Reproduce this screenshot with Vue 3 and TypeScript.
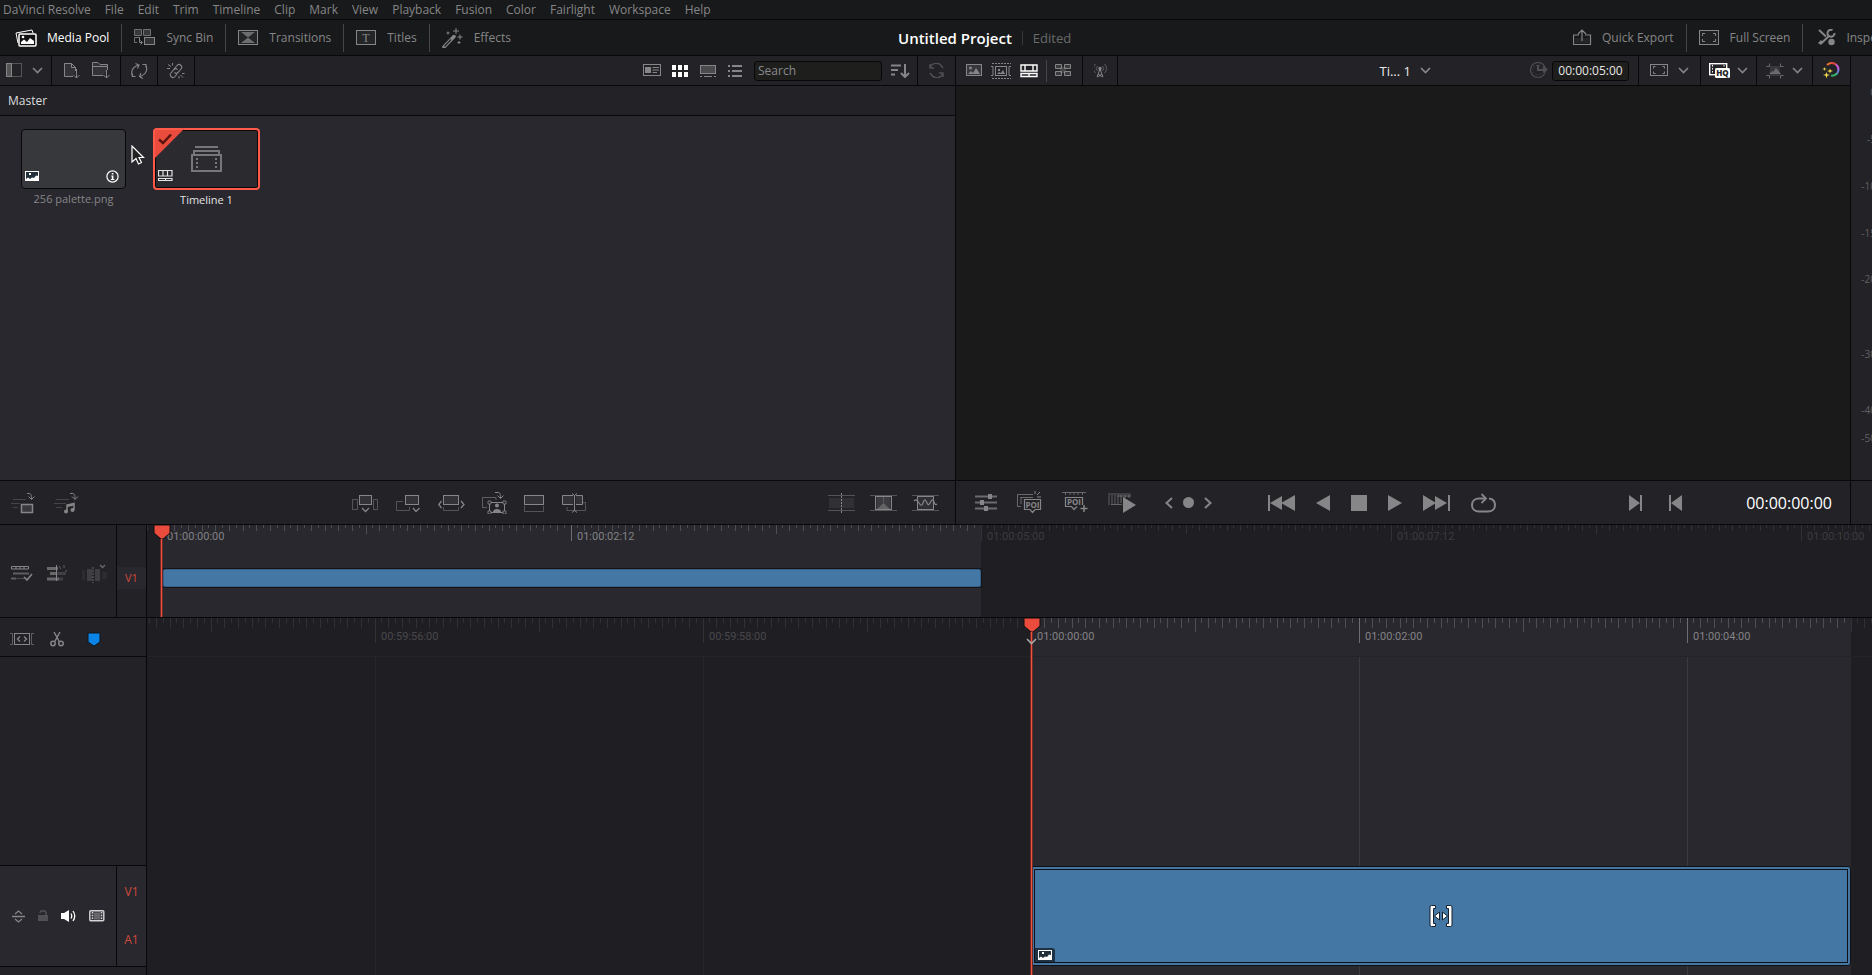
<script setup lang="ts">
import { h, ref } from 'vue'

type IconDef = [width: number, height: number, markup: string]

const stroke = 'fill="none" stroke="currentColor"'

const icons: Record<string, IconDef> = {
  mediaPool: [22, 18, `<path d="M3 14L1 4L17 1L18 4" ${stroke}/><rect x="4" y="5" width="17" height="12" rx="1" fill="#111" stroke="currentColor" stroke-width="1.5"/><path d="M6 15V13L9 10.500L12 13L15 9L19 12V15Z" fill="currentColor"/><circle cx="8" cy="8" r="1.300" fill="currentColor"/>`],
  syncBin: [22, 17, `<path d="M.5 .5H7.500V6.500H.5ZM9.500 .5H16.500V6.500H9.500ZM.5 8.500H6M.5 8.500V13.500H3" ${stroke} opacity=".8"/><path d="M1 1H7V6H1ZM10 1H16V6H10Z" fill="currentColor" opacity=".3"/><path d="M5.500 8.500V13.500H8M6.500 11.500L8.500 13.500L6.500 15.500" ${stroke}/><rect x="10.500" y="8.500" width="10" height="7" fill="#333" stroke="currentColor"/>`],
  transitions: [21, 16, `<rect x=".5" y=".5" width="19" height="14" fill="#242527" stroke="currentColor"/><path d="M3 2H17L10 7.500ZM3 13H17L10 7.500Z" fill="currentColor" opacity=".75"/>`],
  titles: [21, 16, `<rect x=".5" y=".5" width="19" height="14" fill="#242527" stroke="currentColor"/><text x="10" y="11.500" text-anchor="middle" font-family="Liberation Serif, serif" font-size="12" fill="currentColor">T</text>`],
  effects: [22, 20, `<path d="M2 19L12 8.500" ${stroke} stroke-width="3.500" stroke-linecap="round"/><path d="M2.500 18.500L9 11.500" stroke="#222" stroke-width="1.300"/><path d="M14 0V6M11 3H17M18 6.500V11.500M15.500 9H20.500M6 3.500V6.500M4.500 5H7.500M17 13V16M15.500 14.500H18.500" ${stroke}/>`],
  quickExport: [19, 17, `<path d="M6 6H.5V15.500H17.500V6H12M9 12V1M5 5L9 1L13 5" ${stroke} stroke-width="1.200"/><rect x="2" y="9" width="14" height="5" fill="currentColor" opacity=".12"/>`],
  fullScreen: [21, 16, `<rect x=".5" y=".5" width="19" height="14" fill="#202123" stroke="currentColor"/><path d="M3.500 6V3.500H6M14 3.500H16.500V6M16.500 9V11.500H14M6 11.500H3.500V9" ${stroke}/>`],
  inspector: [18, 17, `<path d="M1 1L8 7.500M3 14.500L11 7" ${stroke} stroke-width="2"/><path d="M0 14L3 11L5 13.500L3 16Z" fill="currentColor"/><path d="M14.500 1A3.500 3.500 0 1 0 16.500 4" ${stroke} stroke-width="2"/><circle cx="13.500" cy="13" r="3.200" fill="currentColor"/>`],
  chevron: [11, 7, `<path d="M1 1L5.500 5.500L10 1" ${stroke} stroke-width="1.600"/>`],
  panel: [17, 15, `<rect x=".5" y=".5" width="15" height="13" ${stroke} opacity=".5"/><rect x=".5" y=".5" width="5" height="13" fill="#555" stroke="currentColor"/>`],
  importFile: [16, 16, `<path d="M9 13.500H.5V.5H7.500L11.500 4.500V8M7.500 .5V4.500H11.500" fill="#333237" stroke="currentColor"/><path d="M12.500 6V15M9.500 12L12.500 15L15.500 12" ${stroke}/>`],
  importFolder: [19, 17, `<path d="M11 13.500H.5V.5H6L8 2.500H15.500V8M.5 4.500H15.500" fill="#333237" stroke="currentColor"/><path d="M14.500 8V16M11.500 13L14.500 16L17.500 13" ${stroke}/>`],
  syncClips: [17, 16, `<path d="M1 8.500C1 4 4 2 6 4L7.500 8M1 8.500C1 11.500 2.500 13 4.500 13.500M4 .5H8.500V5M8.500 .5L4 6" ${stroke} stroke-width="1.100" opacity="0"/><path d="M4.500 13.500H1.500V10.500M1.500 13.500L1 12C0 8 2 4 7.500 2M4.500 .5L8 2L6.500 5.500M11.500 1.500H15V4.500M15 2L15.500 4C16.500 8 14 12 9 13.500M12 15.500L8.500 13.500L10 10" ${stroke} stroke-width="1.100"/>`],
  unlink: [18, 16, `<path d="M7 6L10 2.500A2.500 2.500 0 0 1 14 6L11 9.500A2.500 2.500 0 0 1 7.500 9.500M10.500 6.500A2.500 2.500 0 0 0 7 6.500L4 10A2.500 2.500 0 0 0 8 13.500L10 11" ${stroke} stroke-width="1.100"/><path d="M0 5.500H3M1 1.500L4 3.500M5.500 0V2.500M15 10.500H17.500M13.500 12L16 14.500M12 13V15.500" ${stroke}/>`],
  metadata: [18, 13, `<rect x=".5" y=".5" width="17" height="11" ${stroke}/><rect x="2" y="3" width="6" height="6" fill="currentColor"/><path d="M9.500 3.500H16M9.500 6H16M9.500 8.500H14" ${stroke}/>`],
  thumbs: [17, 12, '<path d="M0 0H4V5H0ZM6 0H10V5H6ZM12 0H16V5H12ZM0 7H4V12H0ZM6 7H10V12H6ZM12 7H16V12H12Z" fill="currentColor"/>'],
  strip: [17, 12, `<rect x=".5" y=".5" width="15" height="8" fill="#4b4b4d" stroke="currentColor"/><path d="M0 11.500H2M4 11.500H12M14 11.500H16" ${stroke}/>`],
  list: [15, 12, '<path d="M0 0H2V2H0ZM4 0H14V2H4ZM0 5H2V7H0ZM4 5H14V7H4ZM0 10H2V12H0ZM4 10H14V12H4Z" fill="currentColor"/>'],
  sort: [19, 14, `<path d="M0 1.500H10M0 6H7M0 10.500H4M14 0V12M10 9L14 13L18 9" ${stroke} stroke-width="2"/>`],
  refresh: [16, 15, `<path d="M1 5A6.500 6.500 0 0 1 12.500 3L14 5M14 10A6.500 6.500 0 0 1 2.500 12L1 10M1 1V5H5M14 14V10H10" ${stroke} stroke-width="1.400"/>`],
  image: [17, 13, `<rect x=".5" y=".5" width="15" height="11" fill="#38373c" stroke="currentColor"/><path d="M2 10L5 7L7 9L10 4L14 10Z" fill="currentColor"/><circle cx="4.500" cy="4" r="1.500" fill="currentColor"/>`],
  sourceStrip: [21, 16, `<path d="M1 .5H20M1 15.500H20" ${stroke} stroke-dasharray="2 1"/><rect x="4.500" y="3.500" width="11" height="9" ${stroke}/><path d="M0 3.500H2V12.500H0M20 3.500H18V12.500H20" ${stroke}/><path d="M6 11L8 9L10 10L12 7L14 11ZM7 6H9V8H7Z" fill="currentColor"/>`],
  timelineView: [18, 14, `<path d="M1 1H17V7H1ZM5 1V7M13 1V7M1 9.500H17V12.500H1ZM9 9.500V12.500" ${stroke} stroke-width="1.400"/>`],
  timelineSmall: [15, 11, `<path d="M.5 .5H14V6H.5ZM5 .5V6M9.500 .5V6M.5 8.500H14V10.500H.5ZM7.500 8V11" ${stroke} stroke-width="1.200"/>`],
  quad: [17, 13, `<path d="M.5 .5H6.500V4.500H.5ZM9.500 .5H15.500V4.500H9.500ZM.5 7.500H6.500V11.500H.5ZM9.500 7.500H15.500V11.500H9.500Z" fill="#3b3a3f" stroke="currentColor"/><path d="M5 3H11V9H5Z" fill="currentColor" opacity=".35"/>`],
  antenna: [13, 14, `<path d="M3.500 2A3.500 3.500 0 0 0 3.500 7M8.500 2A3.500 3.500 0 0 1 8.500 7M1.500 0A6 6 0 0 0 1.500 9M10.500 0A6 6 0 0 1 10.500 9" ${stroke} opacity=".6"/><circle cx="6" cy="4.500" r="1.700" fill="currentColor"/><path d="M6 5L3 13M6 5L9 13M4 10L8.500 13M8 10L3.500 13" ${stroke}/>`],
  clock: [19, 17, `<circle cx="8" cy="8" r="7.500" ${stroke} stroke-width="1.200"/><circle cx="8" cy="8" r="5" ${stroke} stroke-dasharray="1 2"/><path d="M8 3V8H15" ${stroke} stroke-width="2"/><path d="M13 4L18 7.500L13 11Z" fill="currentColor"/>`],
  frame: [19, 13, `<rect x=".5" y=".5" width="17" height="11" ${stroke}/><path d="M3.500 4.500V2.500H5.500M12.500 2.500H14.500V4.500M14.500 7.500V9.500H12.500M5.500 9.500H3.500V7.500" ${stroke}/>`],
  hq: [21, 15, `<rect x=".7" y=".7" width="17" height="11" fill="#232227" stroke="currentColor" stroke-width="1.400"/><path d="M3.500 2V11M15 2V5" ${stroke} stroke-dasharray="1.500 1.500"/><rect x="6" y="5" width="15" height="10" rx="1.500" fill="currentColor"/><text x="13.500" y="13" text-anchor="middle" font-family="Open Sans, sans-serif" font-size="8" font-weight="800" fill="#222">HQ</text>`],
  cropImage: [19, 16, `<path d="M.5 3.500H3.500V.5M17.500 3.500H14.500V.5M.5 12.500H3.500V15.500M17.500 12.500H14.500V15.500" ${stroke}/><rect x="4" y="3" width="10" height="10" fill="currentColor" opacity=".3"/><path d="M3 11L6 8L7 9L10 5L15 11Z" fill="currentColor"/>`],
  colour: [19, 17, '<g fill="none" stroke-width="2"><path d="M5 3A6.500 6.500 0 0 1 10 1" stroke="#e8702f"/><path d="M9 1A6.500 6.500 0 0 1 14.500 3" stroke="#e04545"/><path d="M14 2.500A6.500 6.500 0 0 1 16.500 8" stroke="#c05bd0"/><path d="M16.500 7.500A6.500 6.500 0 0 1 14.500 12" stroke="#6a7fe0"/><path d="M15 11.500A6.500 6.500 0 0 1 9 13.500" stroke="#35b368"/></g><path d="M2.500 5L3 6.500L5 7L3 7.500L2.500 9L2 7.500L0 7L2 6.500ZM8 6.500L8.700 8.300L11 9L8.700 9.700L8 11.500L7.300 9.700L5 9L7.300 8.300ZM4.500 10L5.300 12.300L8 13L5.300 13.700L4.500 16.500L3.700 13.700L1 13L3.700 12.300Z" fill="#f3dc4a"/>'],
  appendVideo: [24, 22, `<path d="M2 7.500H15M0 11.500H9M2 15.500H7" ${stroke} opacity=".35"/><rect x="10.500" y="12.500" width="11" height="8" fill="#38373c" stroke="currentColor" stroke-width="1.500"/><path d="M16 1.500H18C20 1.500 20.500 3 20.500 7M17.500 4.500L20.500 7.500L23.500 4.500" ${stroke}/>`],
  appendAudio: [25, 22, `<path d="M2 7.500H15M0 11.500H12M2 15.500H8" ${stroke} opacity=".35"/><path d="M13 20V13L20 11.500V18" ${stroke} stroke-width="1.500"/><path d="M13 14L20 12.500" ${stroke} stroke-width="2"/><circle cx="12" cy="19.500" r="2" fill="currentColor"/><circle cx="18.500" cy="18" r="2" fill="currentColor"/><path d="M16 1.500H18C20.500 1.500 21 3 21 7M18 4.500L21 7.500L24 4.500" ${stroke}/>`],
  smartInsert: [27, 20, `<rect x="7.500" y="2.500" width="12" height="9" fill="#333237" stroke="currentColor"/><path d="M.5 6.500H5.500V16.500H.5ZM21.500 6.500H25.500V16.500H21.500Z" ${stroke} opacity=".5"/><path d="M10 15L13.500 18.500L17 15" ${stroke} stroke-width="1.300"/>`],
  append: [25, 20, `<rect x="9.500" y="2.500" width="13" height="9" fill="#333237" stroke="currentColor"/><path d="M7 8.500H.5V17.500H13.500V14" ${stroke} opacity=".5"/><path d="M17 15L20 18.500L23.500 15" ${stroke} stroke-width="1.300"/>`],
  ripple: [27, 20, `<rect x="5.500" y="2.500" width="15" height="9" fill="#333237" stroke="currentColor"/><path d="M5.500 14V17.500H20.500V14" ${stroke} opacity=".5"/><path d="M3.500 8L.8 11.500L3.500 15M23 8L26 11.500L23 15" ${stroke} stroke-width="1.300"/>`],
  closeUp: [25, 23, `<path d="M5 16.500H.5V6.500H14V9" ${stroke} opacity=".6"/><path d="M13 1.500H16C18 1.500 18.500 3 18.500 7M15.500 4.500L18.500 7.500L21.500 4.500" ${stroke}/><rect x="7.500" y="11.500" width="15" height="10" ${stroke}/><path d="M6 10H9V13H6ZM21 10H24V13H21ZM6 20H9V23H6ZM21 20H24V23H21Z" fill="#232227" stroke="currentColor" stroke-width=".8"/><circle cx="15" cy="14.500" r="2" fill="currentColor"/><path d="M11 21C11 17 19 17 19 21Z" fill="currentColor"/>`],
  placeOnTop: [21, 20, `<rect x=".5" y="2.500" width="19" height="9" fill="#333237" stroke="currentColor"/><path d="M.5 13V18.500H19.500V13" ${stroke} opacity=".5"/>`],
  sourceOverwrite: [25, 20, `<path d="M11 2.500H.5V11.500H11M14 2.500H20.500V11.500H14" fill="#333237" stroke="currentColor"/><path d="M5 14V17.500H23.500V9.500H21" ${stroke} opacity=".5"/><path d="M12.500 2V18M10 .5L12.500 2.500L15 .5M10 19.500L12.500 17.500L15 19.500" ${stroke}/>`],
  cut: [27, 20, `<path d="M0 2.500H27M0 17.500H27" ${stroke} opacity=".5"/><path d="M1 5H26V15H1Z" fill="currentColor" opacity=".15"/><path d="M13.500 0V20" ${stroke} stroke-dasharray="2 1"/>`],
  dissolve: [27, 20, `<path d="M0 2.500H27M0 17.500H27" ${stroke} opacity=".5"/><rect x="5.500" y="3.500" width="16" height="13" fill="#303034" stroke="currentColor"/><path d="M7 16L13.500 10L20 16Z" fill="currentColor" opacity=".6"/><path d="M13.500 4V10L7 16V4ZM13.500 4V10L20 16V4Z" fill="currentColor" opacity=".15"/><path d="M13.500 4V10" ${stroke} opacity=".4"/>`],
  smooth: [27, 20, `<path d="M0 2.500H27M0 17.500H27" ${stroke} opacity=".5"/><rect x="5.500" y="3.500" width="16" height="13" fill="#303034" stroke="currentColor"/><path d="M2 8C4 6 5 7 7 10S10 13 11 10S13 6 14 8S16 14 18 10S21 6 22 9S24 12 25 11" ${stroke} stroke-width="1.200"/>`],
  sliders: [22, 17, `<path d="M0 2.500H22M0 8.500H22M0 14.500H22" ${stroke} stroke-width="2" opacity=".75"/><path d="M13 0H17V5H13ZM5 6H9V11H5ZM9 12H13V17H9Z" fill="currentColor"/>`],
  poiJump: [25, 23, `<path d="M4 15.500H.5V3.500H16M4 13V6M3.500 6.500H16" ${stroke} opacity=".7"/><path d="M7.500 8.500H23.500V18.500H18L15.500 21.500L13 18.500H7.500Z" fill="#232227" stroke="currentColor" stroke-width="1.200"/><text x="15.500" y="16.800" text-anchor="middle" font-family="Open Sans, sans-serif" font-size="8" font-weight="700" fill="currentColor">POI</text><path d="M18 0V3M20 4L23 1M20 6H24" ${stroke}/>`],
  poiAdd: [26, 22, `<path d="M0 .5H24M3.500 .5V3M8 .5V3M12 .5V3M16 .5V3M20.500 .5V3" ${stroke} opacity=".7"/><path d="M15 14.500L12 17.500L9.500 14.500H3.500V5.500H20.500V13" ${stroke} stroke-width="1.200"/><text x="12" y="13" text-anchor="middle" font-family="Open Sans, sans-serif" font-size="8" font-weight="700" fill="currentColor">POI</text><path d="M22 13V20M18.500 16.500H25.500" ${stroke} stroke-width="1.500"/>`],
  fastReview: [29, 20, `<path d="M0 1H23M3 11.500H14M4 2V12M7 2V12M10 2V12M1 2V12" ${stroke} opacity=".6"/><path d="M9 3H23M13 2V10M17 2V5M21 2V5" ${stroke} opacity=".7"/><path d="M15 4L28 12L15 20Z" fill="currentColor"/>`],
  prev: [8, 12, `<path d="M7 1L1.500 6L7 11" ${stroke} stroke-width="2"/>`],
  dot: [11, 11, '<circle cx="5.500" cy="5.500" r="5.500" fill="currentColor"/>'],
  next: [8, 12, `<path d="M1 1L6.500 6L1 11" ${stroke} stroke-width="2"/>`],
  first: [27, 16, '<path d="M0 0H2V16H0ZM14 1V15L2 8ZM27 0V16L13 8Z" fill="currentColor"/>'],
  back: [14, 16, '<path d="M14 0V16L0 8Z" fill="currentColor"/>'],
  stop: [16, 16, '<path d="M0 0H16V16H0Z" fill="currentColor"/>'],
  play: [14, 16, '<path d="M0 0V16L14 8Z" fill="currentColor"/>'],
  last: [27, 16, '<path d="M0 0V16L13 8ZM12 1V15L24 8ZM25 0H27V16H25Z" fill="currentColor"/>'],
  loop: [25, 20, `<path d="M15 5.500H8C4 5.500 1 8 1 12S4 18.500 8 18.500H17C21 18.500 24 16 24 12S22 6 18 5.500" ${stroke} stroke-width="2"/><path d="M10.500 1L15 5.500L10.500 10" ${stroke} stroke-width="1.800"/>`],
  toOut: [14, 16, '<path d="M0 0V16L11 8ZM11 0H13V16H11Z" fill="currentColor"/>'],
  toIn: [14, 16, '<path d="M13 0V16L2 8ZM0 0H2V16H0Z" fill="currentColor"/>'],
  timelineOptions: [22, 16, `<path d="M.5 1.500H17.500V4H.5ZM5 1.500V4M9 1.500V4M13 1.500V4" ${stroke}/><path d="M2 8.500H18M0 13.500H5" ${stroke} stroke-width="2" opacity=".6"/><path d="M5 13.500H13" ${stroke} opacity=".4"/><path d="M13 12L16 15L21 9" ${stroke} stroke-width="1.600"/>`],
  boring: [21, 16, `<path d="M0 3.500H11M0 14H12" ${stroke} stroke-width="3" opacity=".7"/><path d="M3 8.500H9" ${stroke} stroke-width="3" opacity=".7"/><path d="M9 8.500H19M12 14H16" ${stroke} stroke-width="3" opacity=".3"/><path d="M9.500 0V16" ${stroke}/><path d="M14 4L12 1M17 3V0M18 6H20" ${stroke} opacity=".6"/>`],
  silence: [25, 19, `<path d="M5 5V17H10V5ZM13 5H18V17H13Z" fill="currentColor" opacity=".4"/><path d="M0 6H3V16H0ZM20 8H25V15H20Z" fill="currentColor" opacity=".15"/><path d="M11 3V19" ${stroke} stroke-dasharray="2 1"/><path d="M18 1L20.500 3.500L23 1" ${stroke} stroke-width="1.300"/>`],
  trimMode: [24, 14, `<path d="M0 1.500H2.500V12.500H0M24 1.500H21.500V12.500H24" ${stroke} opacity=".6"/><rect x="4.500" y="1.500" width="15" height="11" ${stroke}/><path d="M10 4.500L7.500 7L10 9.500M14 4.500L16.500 7L14 9.500" ${stroke} stroke-width="1.300"/>`],
  scissors: [15, 15, `<path d="M4 0L9.500 10M10 0L4.500 10" ${stroke} stroke-width="1.400"/><circle cx="3" cy="11.500" r="2.200" ${stroke} stroke-width="1.500"/><circle cx="11" cy="11.500" r="2.200" ${stroke} stroke-width="1.500"/>`],
  marker: [14, 15, '<path d="M1 2Q1 1 2 1H12Q13 1 13 2V10L7 14L1 10Z" fill="#0a84e6" stroke="#0c1620"/>'],
  resize: [13, 13, `<path d="M0 6.500H13M3 4L6.500 1L10 4M3 9L6.500 12L10 9" ${stroke} stroke-width="1.300"/>`],
  lock: [11, 12, `<path d="M0 5H10V11H0Z" fill="currentColor"/><path d="M2 3C2 0 8 0 8 3V5" ${stroke} stroke-width="1.500"/>`],
  speaker: [15, 12, `<path d="M0 3H3L8 0V12L3 9H0Z" fill="currentColor"/><path d="M10 3.500Q11.500 6 10 8.500M12 1Q15.500 6 12 11" ${stroke} stroke-width="1.300"/>`],
  film: [16, 12, `<rect x=".8" y=".8" width="14" height="10" rx="1" fill="#38373c" stroke="currentColor" stroke-width="1.400"/><rect x="5" y="2.500" width="6" height="7" fill="#66656a"/><path d="M3.500 2V10M12.500 2V10" ${stroke} stroke-width="1.500" stroke-dasharray="1.500 1.200"/>`],
  picture: [14, 10, '<path d="M0 0H14V10H0Z" fill="#fff"/><path d="M1 1H13V5L11 4.500L9 7L7 6.500L5 8L3 6.500L1 8Z" fill="#22303c"/><rect x="4" y="2" width="2" height="2" fill="#fff"/>'],
  info: [13, 13, `<circle cx="6.500" cy="6.500" r="5.600" ${stroke} stroke-width="1.200"/><path d="M5.800 3H7.400V4.400H5.800ZM5.200 5.500H7.400V9H8.400V10H4.800V9H5.800V6.500H5.200Z" fill="currentColor"/>`],
  stack: [31, 26, `<path d="M4 1H27M3 8V5H28V8" ${stroke} stroke-width="2"/><rect x="1" y="9" width="29" height="16" ${stroke} stroke-width="2"/><path d="M6 12V23M25 12V23" ${stroke} stroke-width="2" stroke-dasharray="2 2"/>`],
  check: [14, 12, '<path d="M1 6.500L5 10L13 1.500" fill="none" stroke="#5c1410" stroke-width="2.500"/>'],
  arrow: [14, 21, '<path d="M1 1V17L5 13.500L7.500 19L10.500 17.500L8 12.500H12.500Z" fill="#222" stroke="#fff" stroke-width="1.200"/>'],
  trimCursor: [24, 24, '<g fill="#fff" stroke="#16212c" stroke-width="1"><path d="M6.500 1.500H2.500Q1 1.500 1 3V21Q1 22.500 2.500 22.500H6.500V19.500H4.500V4.500H6.500Z"/><path d="M17.500 1.500H21.500Q23 1.500 23 3V21Q23 22.500 21.500 22.500H17.500V19.500H19.500V4.500H17.500Z"/><path d="M10.500 8V16L5.500 12ZM13.500 8V16L18.500 12Z"/></g>'],
  head: [18, 14, '<path d="M1 0H17V8L10 14H8L1 8Z" fill="#e94b3c" stroke="#111"/>'],
}

const Icon = (props: { name: string }) => {
  const [w, hgt, markup] = icons[props.name]
  return h('svg', { width: w, height: hgt, viewBox: `0 0 ${w} ${hgt}`, 'aria-hidden': 'true', innerHTML: markup })
}

const menus = ['DaVinci Resolve', 'File', 'Edit', 'Trim', 'Timeline', 'Clip', 'Mark', 'View', 'Playback', 'Fusion', 'Color', 'Fairlight', 'Workspace', 'Help']
const panels = [
  { label: 'Media Pool', icon: 'mediaPool' },
  { label: 'Sync Bin', icon: 'syncBin' },
  { label: 'Transitions', icon: 'transitions' },
  { label: 'Titles', icon: 'titles' },
  { label: 'Effects', icon: 'effects' },
]
const actions = [
  { label: 'Quick Export', icon: 'quickExport' },
  { label: 'Full Screen', icon: 'fullScreen' },
  { label: 'Inspector', icon: 'inspector' },
]
const activePanel = ref('Media Pool')
const search = ref('')
const duration = ref('00:00:05:00')

const placeTools = ['smartInsert', 'append', 'ripple', 'closeUp', 'placeOnTop', 'sourceOverwrite']
const transitionTools = ['cut', 'dissolve', 'smooth']
const viewTools = ['sliders', 'poiJump', 'poiAdd', 'fastReview']
const transport = ['first', 'back', 'stop', 'play', 'last', 'loop']

const levels = [
  { db: '0', at: 8.4 },
  { db: '-5', at: 19.6 },
  { db: '-10', at: 30.6 },
  { db: '-15', at: 41.7 },
  { db: '-20', at: 52.6 },
  { db: '-30', at: 70.2 },
  { db: '-40', at: 83.4 },
  { db: '-50', at: 90 },
]

const fps = 24
const pxPerFrame = 41 / 6
const clipFrames = 120

function timecode(frame: number): string {
  const total = 3600 * fps + frame
  const secs = Math.floor(total / fps)
  return [Math.floor(secs / 3600), Math.floor(secs / 60) % 60, secs % 60, total % fps]
    .map((n) => String(n).padStart(2, '0'))
    .join(':')
}

interface Ruler {
  origin: number
  ticks: { x: number; kind: string; lit: boolean }[]
  labels: { x: number; text: string; lit: boolean }[]
}

function ruler(origin: number, from: number, to: number, major: number): Ruler {
  const out: Ruler = { origin, ticks: [], labels: [] }
  for (let f = from; f <= to; f++) {
    const x = Math.floor(origin + f * pxPerFrame + 0.01)
    const lit = f >= 0 && f < clipFrames
    const kind = f % major === 0 ? 'major' : f % (major / 2) === 0 ? 'half' : f % 2 === 0 ? 'even' : 'odd'
    out.ticks.push({ x, kind, lit })
    if (kind === 'major') out.labels.push({ x, text: timecode(f), lit })
  }
  return out
}

const overview = ruler(14, -2, 252, 60)
const detail = ruler(884, -129, 144, 48)
const clipWidth = clipFrames * pxPerFrame
</script>

<template>
  <div class="app">
    <nav class="menubar" aria-label="Menu">
      <button v-for="m in menus" :key="m" type="button">{{ m }}</button>
    </nav>

    <header class="titlebar">
      <nav class="panels" aria-label="Panels">
        <button v-for="p in panels" :key="p.label" type="button" :class="{ on: activePanel === p.label }" @click="activePanel = p.label">
          <Icon :name="p.icon" /><span>{{ p.label }}</span>
        </button>
      </nav>
      <div class="project"><h1>Untitled Project</h1><span class="state">Edited</span></div>
      <nav class="panels actions" aria-label="Actions">
        <button v-for="a in actions" :key="a.label" type="button"><Icon :name="a.icon" /><span>{{ a.label }}</span></button>
      </nav>
    </header>

    <main class="upper">
      <section class="pool">
        <div class="bar">
          <div class="cell c-panel"><button type="button" aria-label="Bin list"><Icon name="panel" /></button><button type="button" aria-label="Bin list options"><Icon name="chevron" /></button></div>
          <div class="cell c-import"><button type="button" aria-label="Import media"><Icon name="importFile" /></button><button type="button" aria-label="Import folder"><Icon name="importFolder" /></button></div>
          <div class="cell c-one"><button type="button" aria-label="Sync clips"><Icon name="syncClips" /></button></div>
          <div class="cell c-one"><button type="button" aria-label="Relink"><Icon name="unlink" /></button></div>
          <div class="cell c-views">
            <button type="button" aria-label="Metadata view"><Icon name="metadata" /></button>
            <button type="button" class="on" aria-label="Thumbnail view"><Icon name="thumbs" /></button>
            <button type="button" aria-label="Strip view"><Icon name="strip" /></button>
            <button type="button" aria-label="List view"><Icon name="list" /></button>
            <div class="finder">
              <input v-model="search" class="search" type="text" placeholder="Search" aria-label="Search" />
              <button type="button" aria-label="Sort"><Icon name="sort" /></button>
            </div>
          </div>
          <div class="cell c-one dim"><button type="button" aria-label="Refresh"><Icon name="refresh" /></button></div>
        </div>
        <h2 class="bin">Master</h2>
        <div class="clips">
          <figure>
            <div class="thumb still"><Icon name="picture" class="kind" /><Icon name="info" class="info" /></div>
            <figcaption>256 palette.png</figcaption>
          </figure>
          <figure class="selected">
            <div class="thumb"><Icon name="stack" class="stack" /><Icon name="check" class="check" /><Icon name="timelineSmall" class="kind" /></div>
            <figcaption>Timeline 1</figcaption>
          </figure>
          <Icon name="arrow" class="pointer" />
        </div>
      </section>

      <section class="viewer">
        <div class="bar">
          <div class="cell c-modes">
            <button type="button" aria-label="Source clip"><Icon name="image" /></button>
            <button type="button" aria-label="Source tape"><Icon name="sourceStrip" /></button>
            <button type="button" class="on" aria-label="Timeline"><Icon name="timelineView" /></button>
            <i class="rule"></i>
            <button type="button" aria-label="Sync bin"><Icon name="quad" /></button>
          </div>
          <div class="cell c-one"><button type="button" aria-label="Live overwrite"><Icon name="antenna" /></button></div>
          <div class="cell c-name"><button type="button" class="name">Ti... 1 <Icon name="chevron" /></button></div>
          <div class="cell c-time"><span class="dim"><Icon name="clock" /></span><input v-model="duration" class="duration" type="text" aria-label="Duration" /></div>
          <div class="cell c-pair first"><button type="button" aria-label="Timeline resolution"><Icon name="frame" /></button><button type="button" aria-label="Resolution options"><Icon name="chevron" /></button></div>
          <div class="cell c-pair"><button type="button" class="on" aria-label="Quality"><Icon name="hq" /></button><button type="button" aria-label="Quality options"><Icon name="chevron" /></button></div>
          <div class="cell c-pair"><button type="button" class="dim2" aria-label="Transform"><Icon name="cropImage" /></button><button type="button" aria-label="Transform options"><Icon name="chevron" /></button></div>
          <div class="cell c-one"><button type="button" aria-label="Auto color"><Icon name="colour" /></button></div>
        </div>
        <div class="screen"></div>
      </section>

      <aside class="meter">
        <span v-for="l in levels" :key="l.db" :style="{ top: l.at + '%' }">{{ l.db }}</span>
      </aside>
    </main>

    <div class="tools">
      <div class="edit">
        <div class="group adders"><button type="button" aria-label="Video only"><Icon name="appendVideo" /></button><button type="button" aria-label="Audio only"><Icon name="appendAudio" /></button></div>
        <div class="group place"><button v-for="t in placeTools" :key="t" type="button" :aria-label="t"><Icon :name="t" /></button></div>
        <div class="group trans"><button v-for="t in transitionTools" :key="t" type="button" :aria-label="t"><Icon :name="t" /></button></div>
      </div>
      <div class="playback">
        <div class="group view"><button v-for="t in viewTools" :key="t" type="button" :aria-label="t"><Icon :name="t" /></button></div>
        <div class="group jog"><button type="button" aria-label="Previous"><Icon name="prev" /></button><button type="button" aria-label="Jog"><Icon name="dot" /></button><button type="button" aria-label="Next"><Icon name="next" /></button></div>
        <i class="gap-a"></i>
        <div class="group run"><button v-for="t in transport" :key="t" type="button" :aria-label="t"><Icon :name="t" /></button></div>
        <i class="gap-b"></i>
        <div class="group ends"><button type="button" aria-label="Go to out"><Icon name="toOut" /></button><button type="button" aria-label="Go to in"><Icon name="toIn" /></button></div>
        <i class="gap-c"></i>
        <output class="clock">00:00:00:00</output>
      </div>
      <div class="filler"></div>
    </div>

    <section class="overview">
      <div class="side">
        <button type="button" aria-label="Timeline options"><Icon name="timelineOptions" /></button>
        <button type="button" aria-label="Boring detector"><Icon name="boring" /></button>
        <button type="button" class="dim2" aria-label="Silence"><Icon name="silence" /></button>
      </div>
      <div class="tracks"><span>V1</span></div>
      <div class="lane">
        <div class="lit" :style="{ left: overview.origin + 'px', width: clipWidth + 'px' }"></div>
        <div class="ruler">
          <i v-for="t in overview.ticks" :key="t.x" :class="[t.kind, { active: t.lit }]" :style="{ left: t.x + 'px' }"></i>
          <span v-for="l in overview.labels" :key="l.x" :class="{ active: l.lit }" :style="{ left: l.x + 'px' }">{{ l.text }}</span>
        </div>
        <div class="strip" :style="{ marginLeft: overview.origin + 2 + 'px', width: clipWidth - 2 + 'px' }"></div>
        <div class="playhead" :style="{ left: overview.origin + 'px' }"><Icon name="head" /></div>
      </div>
    </section>

    <section class="detail">
      <div class="heads">
        <div class="modes">
          <button type="button" aria-label="Trim mode"><Icon name="trimMode" /></button>
          <button type="button" aria-label="Split"><Icon name="scissors" /></button>
          <button type="button" aria-label="Marker"><Icon name="marker" /></button>
        </div>
        <div class="blank"></div>
        <div class="track">
          <div class="switches">
            <button type="button" aria-label="Track height"><Icon name="resize" /></button>
            <button type="button" class="dim" aria-label="Lock"><Icon name="lock" /></button>
            <button type="button" class="on" aria-label="Mute"><Icon name="speaker" /></button>
            <button type="button" class="soft" aria-label="Video"><Icon name="film" /></button>
          </div>
          <div class="names"><span>V1</span><span>A1</span></div>
        </div>
      </div>
      <div class="lane">
        <div class="lit" :style="{ left: detail.origin + 'px', width: clipWidth + 'px' }"></div>
        <template v-for="l in detail.labels" :key="l.x"><i v-if="l.x !== detail.origin" class="grid" :class="{ active: l.lit }" :style="{ left: l.x + 'px' }"></i></template>
        <div class="ruler">
          <i v-for="t in detail.ticks" :key="t.x" :class="[t.kind, { active: t.lit }]" :style="{ left: t.x + 'px' }"></i>
          <span v-for="l in detail.labels" :key="l.x" :class="{ active: l.lit }" :style="{ left: l.x + 'px' }">{{ l.text }}</span>
        </div>
        <div class="space"></div>
        <div class="clip" :style="{ marginLeft: detail.origin + 'px', width: clipWidth + 'px' }">
          <div class="body"><Icon name="trimCursor" /><span class="badge"><Icon name="picture" /></span></div>
        </div>
        <div class="playhead" :style="{ left: detail.origin + 'px' }"><Icon name="head" /><Icon name="chevron" class="snap" /></div>
      </div>
    </section>
  </div>
</template>

<style>
body {
  margin: 0;
  background: #18191a;
}
</style>

<style scoped>
.app {
  display: grid;
  grid-template-columns: minmax(0, 1fr);
  grid-template-rows: 20px 36px minmax(0, 425fr) 44px 93px minmax(0, 357fr);
  height: 100vh;
  overflow: hidden;
  background: #18191a;
  color: #868688;
  font: 12px/16px "Open Sans", "Noto Sans", sans-serif;
}
.app * {
  box-sizing: border-box;
}
svg {
  display: block;
  flex: none;
}
button {
  display: flex;
  align-items: center;
  padding: 0;
  border: 0;
  background: none;
  color: inherit;
  font: inherit;
  white-space: nowrap;
}
h1, h2, figure {
  margin: 0;
}
.on {
  color: #fff;
}
.dim {
  color: #505054;
}
.dim2 {
  color: #6a6a6c;
}
.menubar {
  display: flex;
  gap: 14px;
  padding: 0 3px;
  border-bottom: 1px solid #08080a;
}
.titlebar {
  display: grid;
  grid-template-columns: minmax(0, 898fr) minmax(0, 662fr) 312px;
  overflow: hidden;
  border-bottom: 1px solid #08080a;
}
.panels {
  display: flex;
  align-items: center;
  padding-left: 3px;
}
.panels button {
  gap: 10px;
  height: 28px;
  padding: 0 12px;
  border-right: 1px solid #454547;
}
.panels button:last-child {
  border-right: 0;
}
.actions {
  padding-left: 1px;
}
.actions button:last-child {
  padding-left: 15px;
}
.project {
  display: flex;
  align-items: center;
}
.project h1 {
  color: #fff;
  font-size: 15px;
  font-weight: 600;
  white-space: nowrap;
}
.state {
  margin-left: 10px;
  padding-left: 10px;
  border-left: 1px solid #38383a;
  color: #6a6a6c;
  font-size: 13px;
  line-height: 14px;
}
.upper {
  display: grid;
  grid-template-columns: minmax(0, 956fr) minmax(0, 895fr) 21px;
  border-bottom: 1px solid #08080a;
}
.pool {
  display: flex;
  flex-direction: column;
  min-width: 0;
  border-right: 1px solid #08080a;
  background: #29282e;
}
.bar {
  display: flex;
  height: 30px;
  border-bottom: 1px solid #08080a;
  background: #232227;
}
.cell {
  display: flex;
  align-items: center;
  border-right: 1px solid #08080a;
}
.cell:last-child {
  border-right: 0;
}
.c-panel {
  gap: 9px;
  padding: 0 8px 0 6px;
}
.c-import {
  gap: 12px;
  padding: 0 9px 0 12px;
}
.c-one {
  justify-content: center;
  width: 37px;
}
.c-views {
  flex: 1;
  justify-content: flex-end;
  gap: 11px;
  padding-right: 7px;
}
.finder {
  display: flex;
  align-items: center;
  gap: 9px;
}
.search, .duration {
  height: 20px;
  padding: 0 3px;
  border: 1px solid #08080a;
  border-radius: 3px;
  outline: 0;
  background: #1e1e1d;
  color: #e6e6e6;
  font: inherit;
}
.search {
  width: 128px;
}
.search::placeholder {
  color: #8a8a8c;
  opacity: 1;
}
.bin {
  height: 30px;
  padding: 7px 8px;
  border-bottom: 1px solid #08080a;
  background: #232227;
  color: #dededf;
  font-size: 12px;
  font-weight: 400;
}
.clips {
  position: relative;
  display: flex;
  flex: 1;
  gap: 26px;
  padding: 12px 20px;
}
figure {
  width: 107px;
  text-align: center;
}
figcaption {
  margin-top: 2px;
  font-size: 11px;
}
.thumb {
  position: relative;
  display: grid;
  place-items: center;
  height: 62px;
  border: 2px solid #ff5a49;
  border-radius: 4px;
  background: #2b2a2f;
  box-shadow: inset 0 0 0 1px #08080a;
}
.still {
  height: 60px;
  margin: 1px 1px;
  border: 1px solid #08080a;
  background: #37383c;
  box-shadow: none;
}
.selected {
  color: #e2e2e3;
}
.selected .thumb::before {
  content: "";
  position: absolute;
  top: 0;
  left: 0;
  width: 28px;
  height: 28px;
  background: #e94b3c;
  clip-path: polygon(0 0, 100% 0, 0 100%);
}
.thumb .kind {
  position: absolute;
  bottom: 7px;
  left: 3px;
}
.thumb .info {
  position: absolute;
  right: 6px;
  bottom: 5px;
  color: #fff;
}
.stack {
  color: #77777a;
}
.thumb .check {
  position: absolute;
  top: 3px;
  left: 3px;
}
.pointer {
  position: absolute;
  top: 29px;
  left: 131px;
}
.viewer {
  display: flex;
  flex-direction: column;
  min-width: 0;
  border-right: 1px solid #08080a;
}
.screen {
  flex: 1;
  background: #1a1a1a;
}
.c-modes {
  gap: 8px;
  padding: 0 10px 0 10px;
}
.rule {
  width: 1px;
  height: 22px;
  background: #454449;
}
.viewer .c-modes + .c-one {
  width: 35px;
}
.c-name {
  flex: 1;
  justify-content: flex-end;
  border-right: 0;
}
.name {
  gap: 9px;
  color: #e9e9ea;
  font-size: 13px;
}
.name svg {
  color: #8a8a8c;
}
.c-time {
  gap: 3px;
  margin-left: 99px;
  padding-right: 9px;
}
.duration {
  width: 77px;
  text-align: center;
}
.c-pair {
  justify-content: center;
  gap: 7px;
  width: 56px;
}
.c-pair.first {
  gap: 9px;
  width: 62px;
}
.meter {
  position: relative;
  overflow: hidden;
  background: #232227;
  color: #606063;
  font-size: 10px;
  line-height: 14px;
}
.meter span {
  position: absolute;
  right: -4px;
  margin-top: -7px;
}
.tools {
  display: grid;
  grid-template-columns: minmax(0, 956fr) minmax(0, 895fr) 21px;
  border-bottom: 1px solid #08080a;
  background: #232227;
}
.edit {
  display: grid;
  grid-template-columns: 341fr auto 352fr;
  align-items: center;
  padding: 0 16px 0 11px;
  border-right: 1px solid #08080a;
}
.group {
  display: flex;
  align-items: center;
}
.adders {
  gap: 19px;
}
.place {
  gap: 17px;
}
.trans {
  justify-content: flex-end;
  gap: 15px;
}
.playback {
  display: flex;
  align-items: center;
  padding: 0 18px 0 19px;
  border-right: 1px solid #08080a;
}
.view {
  gap: 20px;
  margin-right: 28px;
}
.jog {
  gap: 10px;
}
.run {
  gap: 21px;
}
.ends {
  gap: 26px;
}
.gap-a {
  flex: 57;
}
.gap-b {
  flex: 135;
}
.gap-c {
  flex: 64;
}
.clock {
  color: #fff;
  font-size: 16px;
  font-weight: 500;
}
.overview {
  display: grid;
  grid-template-columns: 117px 30px minmax(0, 1fr);
  border-bottom: 1px solid #08080a;
  background: #232227;
}
.side {
  display: flex;
  align-items: center;
  gap: 14px;
  padding: 4px 0 0 11px;
  border-right: 1px solid #08080a;
}
.tracks {
  display: flex;
  flex-direction: column;
  justify-content: center;
  padding-top: 14px;
  border-right: 1px solid #08080a;
}
.tracks span {
  background: #29282e;
  color: #d0493d;
  font-size: 11px;
  line-height: 22px;
  text-align: center;
}
.lane {
  position: relative;
  display: flex;
  flex-direction: column;
  overflow: hidden;
  background: #1f1e23;
}
.lit {
  position: absolute;
  top: 0;
  bottom: 0;
  background: #29282e;
}
.ruler {
  position: relative;
  flex: none;
  font: 11px/14px Roboto, "Open Sans", sans-serif;
}
.ruler i {
  position: absolute;
  top: 0;
  width: 1px;
  background: #313036;
}
.ruler i.active {
  background: #4e4d53;
}
.ruler .major.active {
  background: #6e6e72;
}
.ruler span {
  position: absolute;
  margin-left: 6px;
  color: #3c3c40;
}
.ruler span.active {
  color: #828284;
}
.overview .ruler {
  height: 44px;
}
.overview .ruler span {
  top: 5px;
}
.overview .odd {
  height: 3px;
}
.overview .even {
  height: 6px;
}
.overview .half {
  height: 9px;
}
.overview .major {
  height: 16px;
}
.strip {
  position: relative;
  height: 18px;
  border: 1px solid #356088;
  border-radius: 2px;
  background: #4477a3;
  box-shadow: 0 0 0 1px #141418;
}
.playhead {
  position: absolute;
  top: 0;
  bottom: 0;
  width: 1px;
  background: #f0523f;
  box-shadow: 0 0 0 1px #6d2b28;
}
.playhead svg {
  position: absolute;
  top: 0;
  left: -8px;
}
.playhead .snap {
  top: 20px;
  left: -5px;
  color: #a8a8aa;
}
.detail {
  display: grid;
  grid-template-columns: 147px minmax(0, 1fr);
}
.heads {
  display: grid;
  grid-template-rows: 39px minmax(0, 1fr) 101px 8px;
  border-right: 1px solid #08080a;
  background: #232227;
}
.modes {
  display: flex;
  align-items: center;
  gap: 16px;
  padding: 4px 0 0 10px;
  border-bottom: 1px solid #08080a;
}
.modes button:last-child {
  margin-left: 6px;
}
.blank {
  border-bottom: 1px solid #08080a;
}
.track {
  display: grid;
  grid-template-columns: 117px 1fr;
  border-bottom: 1px solid #08080a;
  background: #29282e;
}
.switches {
  display: flex;
  align-items: center;
  justify-content: space-between;
  padding: 0 11px 0 12px;
  border-right: 1px solid #08080a;
}
.soft {
  color: #d4d4d6;
}
.names {
  display: flex;
  flex-direction: column;
  justify-content: center;
  gap: 32px;
  color: #d0493d;
  text-align: center;
}
.detail .ruler {
  height: 39px;
  border-bottom: 1px solid #242328;
}
.detail .ruler span {
  top: 12px;
}
.detail .ruler span:not(.active) {
  color: #48484b;
}
.detail .odd {
  height: 5px;
}
.detail .even {
  height: 10px;
}
.detail .half {
  height: 14px;
}
.detail .major {
  height: 25px;
}
.grid {
  position: absolute;
  top: 39px;
  bottom: 0;
  width: 1px;
  background: #27262b;
}
.grid.active {
  background: #3b3a40;
}
.space {
  flex: 1;
}
.clip {
  position: relative;
  flex: none;
  height: 100px;
  margin-bottom: 9px;
  padding: 2px;
  border: 1px solid #101014;
  border-radius: 3px;
  background: #4477a3;
}
.body {
  position: relative;
  display: grid;
  place-items: center;
  height: 100%;
  border: 1px solid #101014;
}
.badge {
  position: absolute;
  bottom: 0;
  left: 0;
  padding: 2px 3px;
  border-radius: 0 3px 0 0;
  background: #1f3144;
}
</style>
